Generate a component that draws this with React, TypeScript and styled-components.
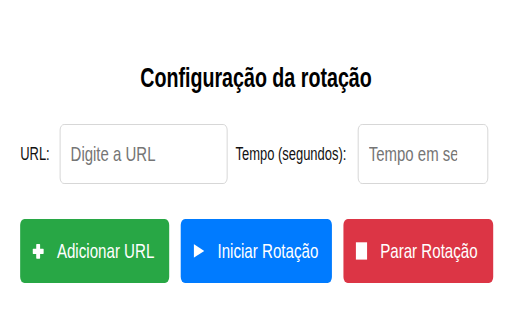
import React from "react";
import styled, { createGlobalStyle } from "styled-components";

const K = 0.72;

const GlobalStyle = createGlobalStyle`
  html, body {
    margin: 0;
    padding: 0;
    background: #ffffff;
    overflow: hidden;
  }
  body {
    font-family: "Liberation Sans", Arial, Helvetica, sans-serif;
    color: #000;
  }
  * { box-sizing: border-box; }
`;

const Viewport = styled.div`
  width: 512px;
  height: 320px;
  overflow: hidden;
`;

/* The captured page is horizontally condensed; lay it out at natural width and condense it. */
const Page = styled.div`
  width: ${512 / K}px;
  height: 320px;
  padding-top: 62px;
  display: flex;
  flex-direction: column;
  transform: scaleX(${K});
  transform-origin: 0 0;
`;

const Title = styled.h1`
  margin: 0;
  font-size: 27.3px;
  line-height: 32px;
  font-weight: 700;
  text-align: center;
  color: #000;
`;

const FormRow = styled.div`
  margin-top: 30px;
  padding-left: 28px;
  display: flex;
  align-items: center;
  height: 60px;
`;

const Label = styled.label<{ $gap: number }>`
  font-size: 18px;
  color: #111;
  margin-right: ${(p) => p.$gap}px;
  white-space: nowrap;
`;

const Field = styled.input<{ $width: number; $padRight: number; $after: number }>`
  width: ${(p) => p.$width}px;
  height: 60px;
  margin-right: ${(p) => p.$after}px;
  padding: 0 ${(p) => p.$padRight}px 0 14px;
  border: 1px solid #d0d0d0;
  border-radius: 6px;
  background: #fff;
  font-family: "Liberation Sans", Arial, sans-serif;
  font-size: 20.8px;
  color: #333;
  outline: none;
  &::placeholder {
    color: #757575;
    opacity: 1;
  }
`;

const ButtonRow = styled.div`
  margin-top: 35px;
  padding-left: 28px;
  display: flex;
  gap: 16px;
`;

const Button = styled.button<{ $bg: string; $width: number }>`
  width: ${(p) => p.$width}px;
  height: 64px;
  display: flex;
  align-items: center;
  gap: 18px;
  padding: 0 0 0 17px;
  border: none;
  border-radius: 6px;
  background: ${(p) => p.$bg};
  color: #fff;
  font-family: "Liberation Sans", Arial, sans-serif;
  font-size: 21px;
  white-space: nowrap;
  cursor: pointer;
`;

const IconBox = styled.span`
  display: flex;
  align-items: center;
  justify-content: center;
  width: 16px;
  flex-shrink: 0;
`;

const PlusIcon = () => (
  <svg width="16" height="15" viewBox="0 0 16 15" aria-hidden="true">
    <rect x="5.3" y="0" width="5.4" height="14.7" rx="0.8" fill="#fff" />
    <rect x="0.3" y="4.8" width="15.4" height="5.2" rx="0.8" fill="#fff" />
  </svg>
);

const PlayIcon = () => (
  <svg width="15" height="14" viewBox="0 0 15 14" aria-hidden="true">
    <polygon points="0,0 14.7,6.9 0,13.8" fill="#fff" />
  </svg>
);

const StopIcon = () => (
  <svg width="16" height="18" viewBox="0 0 16 18" aria-hidden="true">
    <rect x="0" y="0.3" width="16.2" height="17.3" fill="#fff" />
  </svg>
);

export default function App() {
  return (
    <Viewport>
      <GlobalStyle />
      <Page>
        <Title>Configuração da rotação</Title>
        <FormRow>
          <Label $gap={14}>URL:</Label>
          <Field $width={233} $after={11} $padRight={12} type="text" placeholder="Digite a URL" />
          <Label $gap={16}>Tempo (segundos):</Label>
          <Field $width={181} $after={0} $padRight={42} type="text" placeholder="Tempo em segundos" />
        </FormRow>
        <ButtonRow>
          <Button $bg="#28a745" $width={207}>
            <IconBox><PlusIcon /></IconBox>
            Adicionar URL
          </Button>
          <Button $bg="#007bff" $width={210}>
            <IconBox><PlayIcon /></IconBox>
            Iniciar Rotação
          </Button>
          <Button $bg="#dc3545" $width={208}>
            <IconBox><StopIcon /></IconBox>
            Parar Rotação
          </Button>
        </ButtonRow>
      </Page>
    </Viewport>
  );
}
